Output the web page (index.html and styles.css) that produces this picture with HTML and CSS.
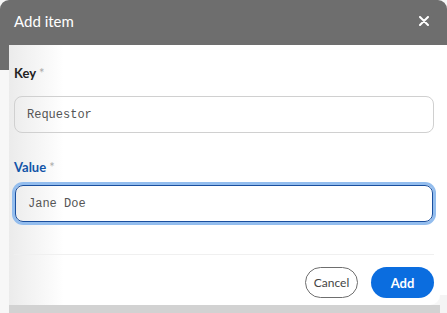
FILE: index.html
```html
<!DOCTYPE html>
<html lang="en">
<head>
    <meta charset="UTF-8">
    <meta name="viewport" content="width=device-width, initial-scale=1.0">
    <title>Add item</title>

    <link rel="stylesheet" href="styles.css">
</head>
<body>
    <div class="dialog">
        <div class="head">
            <span class="title">Add item</span>
            <button type="button" class="close" aria-label="Close">
                <svg width="10" height="10" viewBox="0 0 10 10"><path d="M1 1 L9 9 M9 1 L1 9" stroke="#fff" stroke-width="2" stroke-linecap="round"/></svg>
            </button>
        </div>

        <div class="frame">
            <div class="rail"></div>
            <div class="column">
                <div class="panel">
                    <label class="label">Key <span class="req">*</span></label>
                    <div class="field">Requestor</div>

                    <label class="label active">Value <span class="req">*</span></label>
                    <div class="field focus">Jane Doe</div>

                    <div class="footer">
                        <button type="button" class="btn cancel">Cancel</button>
                        <button type="button" class="btn add">Add</button>
                    </div>
                </div>
                <div class="floor"></div>
            </div>
            <div class="edge"></div>
        </div>
    </div>
</body>
</html>
```

FILE: styles.css
```css
body {
    margin: 0;
    font-family: Lato, "Open Sans", sans-serif;
    background-color: #f7f7f7;
}

.dialog {
    width: 447px;
    height: 313px;
    display: flex;
    flex-direction: column;
}

.head {
    height: 45px;
    background-color: #6e6e6e;
    border-radius: 9px 9px 0 0;
    display: flex;
    align-items: center;
    justify-content: space-between;
    padding: 0 18px 0 14px;
    color: #fff;
}

.title {
    font-size: 15px;
    margin-top: -3px;
}

.close {
    border: 0;
    background: none;
    padding: 0;
    display: flex;
    margin-top: -4px;
}

.frame {
    flex: 1;
    display: flex;
}

.rail {
    width: 9px;
    background: linear-gradient(#6e6e6e 0 25px, #f7f7f7 25px);
}

.column {
    width: 431px;
    display: flex;
    flex-direction: column;
}

.panel {
    height: 260px;
    box-sizing: border-box;
    padding: 19px 6px 0 5px;
    background: linear-gradient(to right, #ebebeb, #fff 55px);
    border-bottom-right-radius: 10px;
    display: flex;
    flex-direction: column;
}

.floor {
    flex: 1;
    background-color: #d2d2d2;
}

.edge {
    width: 7px;
    background: linear-gradient(#fff 0 250px, #f4f4f4 250px);
}

.label {
    font-size: 13px;
    font-weight: bold;
    color: #222;
    line-height: 18px;
}

.label.active {
    color: #1254a8;
    margin-top: 25px;
}

.req {
    color: #aaa;
    font-weight: normal;
}

.field {
    margin-top: 14px;
    height: 37px;
    box-sizing: border-box;
    border: 1px solid #d0d0d0;
    border-radius: 8px;
    padding: 0 12px;
    display: flex;
    align-items: center;
    font-family: "Liberation Mono", monospace;
    font-size: 12px;
    color: #555;
}

.field.focus {
    margin: 9px 1px 0 1px;
    height: 37px;
    border: 1.5px solid #1a4f9e;
    box-shadow: 0 0 0 3px #93bdee;
}

.footer {
    margin-top: 32px;
    border-top: 1px solid #f0f0f0;
    padding-top: 12px;
    display: flex;
    justify-content: flex-end;
    gap: 13px;
}

.btn {
    height: 31px;
    border-radius: 16px;
    font-family: Lato, sans-serif;
    font-size: 12px;
}

.cancel {
    width: 53px;
    background: #fff;
    border: 1px solid #6e6e6e;
    color: #444;
}

.add {
    width: 63px;
    background: #0b6ddf;
    border: 0;
    color: #fff;
    font-weight: bold;
    font-size: 13px;
}
```
